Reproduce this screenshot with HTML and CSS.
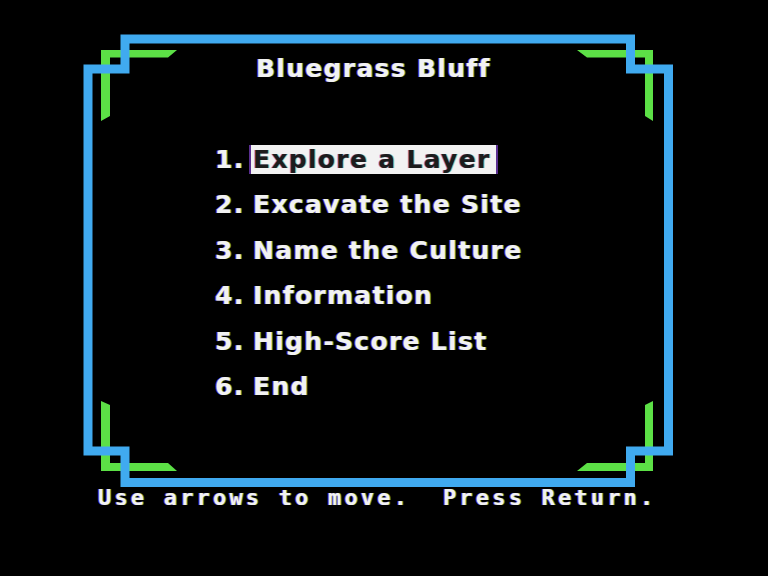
FILE: index.html
```html
<!DOCTYPE html>
<html lang="en">
<head>
  <meta charset="UTF-8">
  <title>Bluegrass Bluff</title>
  <link rel="stylesheet" href="styles.css">
</head>
<body>
  <div class="screen">
    <!-- double border: blue stepped outline with green corner brackets underneath -->
    <svg class="frame" width="768" height="576" viewBox="0 0 768 576">
      <g fill="#5ce046">
        <polygon points="101,50 177,50 168,57.5 110,57.5 110,116 101,121"/>
        <polygon points="653,50 577,50 587,57.5 645,57.5 645,116 653,121"/>
        <polygon points="101,471 177,471 168,463 110,463 110,405 101,401"/>
        <polygon points="653,471 577,471 587,463 645,463 645,405 653,401"/>
      </g>
      <path class="border" d="M88 451 V69 H125 V39 H630.5 V69 H668.5 V451 H630.5 V482.5 H125 V451 Z"/>
    </svg>

    <div class="content">
      <h1 class="title">Bluegrass Bluff</h1>

      <ul class="menu">
        <li><span class="num">1.</span><span class="item selected">Explore a Layer</span></li>
        <li><span class="num">2.</span><span class="item">Excavate the Site</span></li>
        <li><span class="num">3.</span><span class="item">Name the Culture</span></li>
        <li><span class="num">4.</span><span class="item">Information</span></li>
        <li><span class="num">5.</span><span class="item">High-Score List</span></li>
        <li><span class="num">6.</span><span class="item">End</span></li>
      </ul>

      <p class="hint">Use arrows to move.&nbsp; Press Return.</p>
    </div>
  </div>
</body>
</html>
```

FILE: styles.css
```css
html, body {
  margin: 0;
  padding: 0;
  background: #000;
}
.screen {
  position: relative;
  width: 768px;
  height: 576px;
  overflow: hidden;
  background: #000;
  color: #f2f2f2;
  font-family: "DejaVu Sans", "Verdana", sans-serif;
  font-weight: bold;
  /* colour fringing of the old monitor */
  text-shadow: -1px 0 rgba(170, 90, 255, 0.75), 1px 0 rgba(110, 225, 90, 0.65);
}
.frame {
  position: absolute;
  left: 0;
  top: 0;
}
.border {
  fill: none;
  stroke: #40aaf0;
  stroke-width: 9;
  stroke-linejoin: miter;
}
.content {
  position: relative;
  padding-top: 54px;
}
.title {
  margin: 0;
  padding-left: 256px;
  font-size: 25px;
  font-weight: bold;
  line-height: 29px;
  letter-spacing: 1.3px;
}
.menu {
  list-style: none;
  margin: 62px 0 0;
  padding: 0 0 0 215px;
  display: flex;
  flex-direction: column;
  gap: 16.4px;
  font-size: 25px;
  line-height: 29px;
  letter-spacing: 1.3px;
}
.menu li {
  display: flex;
  height: 29px;
}
.num {
  width: 36px;
}
.item {
  display: inline-block;
  padding: 0 5px 0 2px;
}
.item.selected {
  background: #f2f2f2;
  color: #1c1c1c;
  text-shadow: -1px 0 rgba(120, 60, 200, 0.6), 1px 0 rgba(90, 170, 70, 0.5);
  box-shadow: -2px 0 0 #5a2f90, 2px 0 0 #5a2f90;
}
.hint {
  margin: 85.4px 0 0;
  padding-left: 98px;
  font-family: "DejaVu Sans Mono", "Liberation Mono", monospace;
  font-size: 22px;
  line-height: 24px;
  letter-spacing: 3.18px;
}
```
